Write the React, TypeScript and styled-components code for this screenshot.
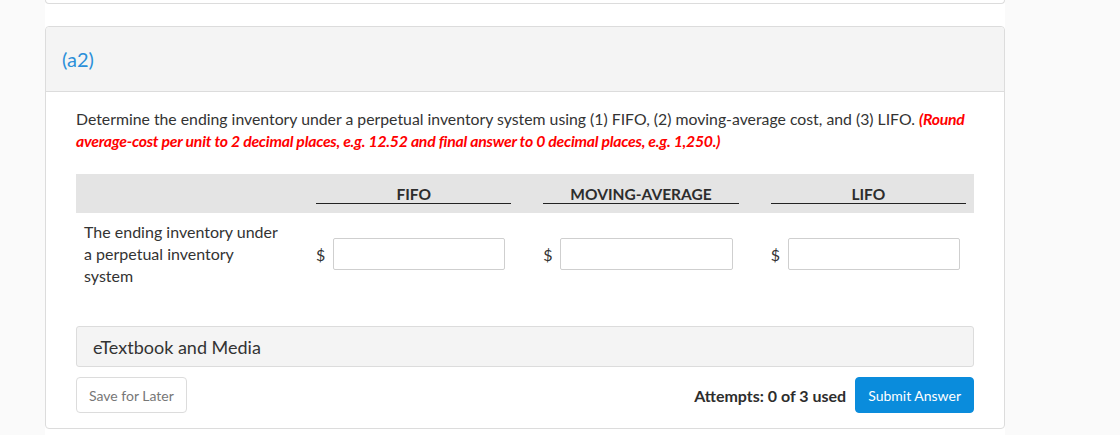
import React from "react";
import styled, { createGlobalStyle } from "styled-components";

const Global = createGlobalStyle`
  html, body { margin: 0; padding: 0; background: #fafafa; }
  body { font-family: Lato, "Open Sans", "Liberation Sans", sans-serif; color: #333; }
  * { box-sizing: border-box; }
`;

const Page = styled.div`
  width: 960px;
  margin-left: 45px;
  background: #fff;
  height: 435px;
  overflow: hidden;
`;

const PrevCard = styled.div`
  height: 4px;
  border: 1px solid #dcdcdc;
  border-top: none;
  border-radius: 0 0 4px 4px;
`;

const Card = styled.section`
  margin-top: 22px;
  border: 1px solid #dcdcdc;
  border-radius: 4px;
  background: #fff;
`;

const CardHeader = styled.header`
  height: 65px;
  padding: 0 16px;
  display: flex;
  align-items: center;
  background: #f4f4f4;
  border-bottom: 1px solid #dcdcdc;
  border-radius: 4px 4px 0 0;
`;

const PartLabel = styled.h2`
  margin: 0;
  font-size: 20px;
  font-weight: 400;
  color: #2b8fd9;
`;

const CardBody = styled.div`
  padding: 16px 30px 15px;
`;

const Question = styled.p`
  margin: 0;
  font-size: 15.8px;
  line-height: 22px;
  color: #333;
`;

const Hint = styled.em`
  color: #f00;
  font-weight: 700;
  letter-spacing: -0.25px;
`;

const Table = styled.div`
  margin-top: 22px;
`;

const Row = styled.div<{ $head?: boolean }>`
  display: grid;
  grid-template-columns: 200px repeat(3, minmax(0, 1fr));
  column-gap: 32px;
  padding: ${(p) => (p.$head ? "11px 8px 9px" : "8px 8px")};
  background: ${(p) => (p.$head ? "#e4e4e4" : "transparent")};
  align-items: center;
`;

const ColHead = styled.div`
  text-align: center;
  font-size: 15.5px;
  font-weight: 700;
  line-height: 18px;
  color: #2d2d2d;
  border-bottom: 1px solid #222;
`;

const RowLabel = styled.div`
  font-size: 16px;
  line-height: 22px;
  color: #333;
`;

const Cell = styled.div`
  display: flex;
  align-items: center;
  padding-right: 6px;
`;

const Dollar = styled.span`
  font-size: 16px;
  color: #333;
  width: 17px;
  flex: none;
`;

const Input = styled.input`
  flex: 1;
  width: 0;
  min-width: 0;
  height: 32px;
  border: 1px solid #cfcfcf;
  border-radius: 2px;
  background: #fff;
  font: inherit;
`;

const Media = styled.div`
  margin-top: 31px;
  height: 41px;
  display: flex;
  align-items: center;
  padding: 0 16px;
  background: #f4f4f4;
  border: 1px solid #dcdcdc;
  border-radius: 3px;
  font-size: 18px;
  color: #333;
`;

const Actions = styled.div`
  margin-top: 10px;
  display: flex;
  align-items: center;
  gap: 9px;
`;

const Button = styled.button<{ $primary?: boolean }>`
  height: 36px;
  padding: 0 12px;
  border-radius: 4px;
  font-family: Lato, "Open Sans", "Liberation Sans", sans-serif;
  font-size: 14px;
  cursor: pointer;
  border: 1px solid ${(p) => (p.$primary ? "#0a8cdc" : "#dcdcdc")};
  background: ${(p) => (p.$primary ? "#0a8cdc" : "#fff")};
  color: ${(p) => (p.$primary ? "#fff" : "#777")};
`;

const Spacer = styled.div`
  flex: 1;
`;

const Attempts = styled.span`
  font-size: 16px;
  font-weight: 700;
  color: #2d2d2d;
`;

const cols = ["FIFO", "MOVING-AVERAGE", "LIFO"];

export default function App() {
  return (
    <>
      <Global />
      <Page>
        <PrevCard />
        <Card>
          <CardHeader>
            <PartLabel>(a2)</PartLabel>
          </CardHeader>
          <CardBody>
            <Question>
              Determine the ending inventory under a perpetual inventory system using (1) FIFO, (2)
              moving-average cost, and (3) LIFO.{" "}
              <Hint>
                (Round average-cost per unit to 2 decimal places, e.g. 12.52 and final answer to 0
                decimal places, e.g. 1,250.)
              </Hint>
            </Question>
            <Table>
              <Row $head>
                <div />
                {cols.map((c) => (
                  <ColHead key={c}>{c}</ColHead>
                ))}
              </Row>
              <Row>
                <RowLabel>The ending inventory under a perpetual inventory system</RowLabel>
                {cols.map((c) => (
                  <Cell key={c}>
                    <Dollar>$</Dollar>
                    <Input aria-label={c} />
                  </Cell>
                ))}
              </Row>
            </Table>
            <Media>eTextbook and Media</Media>
            <Actions>
              <Button>Save for Later</Button>
              <Spacer />
              <Attempts>Attempts: 0 of 3 used</Attempts>
              <Button $primary>Submit Answer</Button>
            </Actions>
          </CardBody>
        </Card>
      </Page>
    </>
  );
}
